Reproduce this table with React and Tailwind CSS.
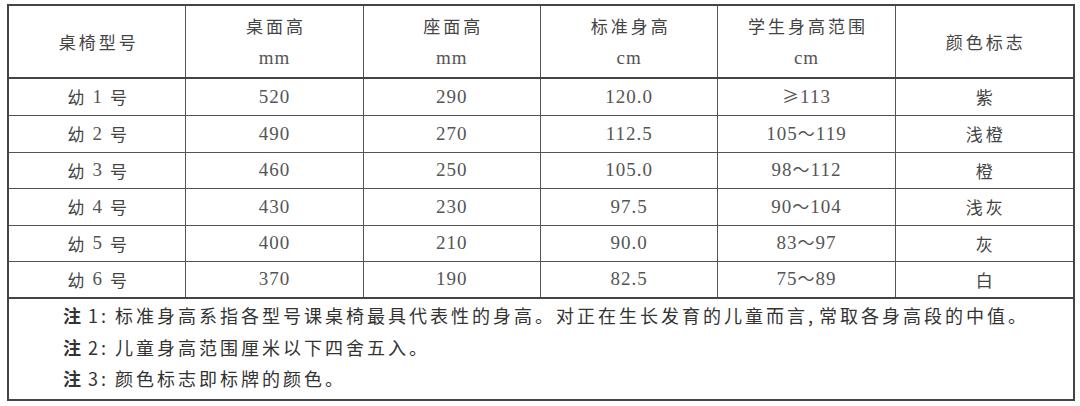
import React from "react";

const cjk = { fontFamily: '"Noto Sans CJK SC", "Noto Sans", sans-serif' };

const rows = [
  { h: "h-[37px]", n: "1", a: "520", b: "290", c: "120.0", d: "≥113", e: "紫" },
  { h: "h-[37px]", n: "2", a: "490", b: "270", c: "112.5", d: "105～119", e: "浅橙" },
  { h: "h-[36px]", n: "3", a: "460", b: "250", c: "105.0", d: "98～112", e: "橙" },
  { h: "h-[37px]", n: "4", a: "430", b: "230", c: "97.5", d: "90～104", e: "浅灰" },
  { h: "h-[36px]", n: "5", a: "400", b: "210", c: "90.0", d: "83～97", e: "灰" },
  { h: "h-[37px]", n: "6", a: "370", b: "190", c: "82.5", d: "75～89", e: "白" },
];

function Num({ children }) {
  const parts = String(children).split(/(～|≥)/);
  return (
    <span className="text-[19px] tracking-[1px] text-[#555] font-['Liberation_Serif',serif]">
      {parts.map((p, i) =>
        p === "～" || p === "≥" ? (
          <span key={i} className="font-['Noto_Sans_CJK_SC',sans-serif] text-[17px] tracking-normal mr-[1px]">
            {p}
          </span>
        ) : (
          <span key={i}>{p}</span>
        )
      )}
    </span>
  );
}

function Cell({ children, last }) {
  return (
    <div
      className={
        "flex items-center justify-center h-full " +
        (last ? "" : "border-r border-[#555]")
      }
    >
      {children}
    </div>
  );
}

function HeadCell({ title, unit, last }) {
  return (
    <div
      className={
        "flex flex-col items-center justify-center h-full " +
        (last ? "" : "border-r border-[#555]")
      }
    >
      <div className="text-[17px] leading-[32px] tracking-[3px] pl-[3px] text-[#444]" style={cjk}>
        {title}
      </div>
      {unit && (
        <div className="text-[19px] leading-[32px] text-[#555] font-['Liberation_Serif',serif] tracking-[1px]">
          {unit}
        </div>
      )}
    </div>
  );
}

function Note({ n, children }) {
  return (
    <div>
      <span className="font-bold">注</span>
      <span className="ml-[4px]">{n}</span>
      <span className="mr-[6px]">:</span>
      {children}
    </div>
  );
}

export default function App() {
  return (
    <div className="w-[1080px] h-[406px] bg-white pt-[4px] pl-[7px]">
      <div className="w-[1068px] border-2 border-[#444] flex flex-col">
        <div className="grid grid-cols-6 h-[73px] border-b-2 border-[#444]">
          <HeadCell title="桌椅型号" />
          <HeadCell title="桌面高" unit="mm" />
          <HeadCell title="座面高" unit="mm" />
          <HeadCell title="标准身高" unit="cm" />
          <HeadCell title="学生身高范围" unit="cm" />
          <HeadCell title="颜色标志" last />
        </div>
        {rows.map((r, i) => (
          <div
            key={r.n}
            className={
              "grid grid-cols-6 " +
              r.h +
              " " +
              (i === rows.length - 1 ? "border-b-2 border-[#444]" : "border-b border-[#555]")
            }
          >
            <Cell>
              <span className="text-[17px] text-[#444] flex items-center" style={cjk}>
                幼
                <span className="font-['Liberation_Serif',serif] text-[19px] text-[#555] mx-[8px]">{r.n}</span>
                号
              </span>
            </Cell>
            <Cell>
              <Num>{r.a}</Num>
            </Cell>
            <Cell>
              <Num>{r.b}</Num>
            </Cell>
            <Cell>
              <Num>{r.c}</Num>
            </Cell>
            <Cell>
              <Num>{r.d}</Num>
            </Cell>
            <Cell last>
              <span className="text-[17px] tracking-[3px] pl-[3px] text-[#444]" style={cjk}>
                {r.e}
              </span>
            </Cell>
          </div>
        ))}
        <div className="h-[100px] pl-[54px] pt-[1px] text-[18px] leading-[31.5px] tracking-[3px] text-[#333]" style={cjk}>
          <Note n="1">
            标准身高系指各型号课桌椅最具代表性的身高。对正在生长发育的儿童而言
            <span className="mr-[3px]">,</span>
            常取各身高段的中值。
          </Note>
          <Note n="2">儿童身高范围厘米以下四舍五入。</Note>
          <Note n="3">颜色标志即标牌的颜色。</Note>
        </div>
      </div>
    </div>
  );
}
